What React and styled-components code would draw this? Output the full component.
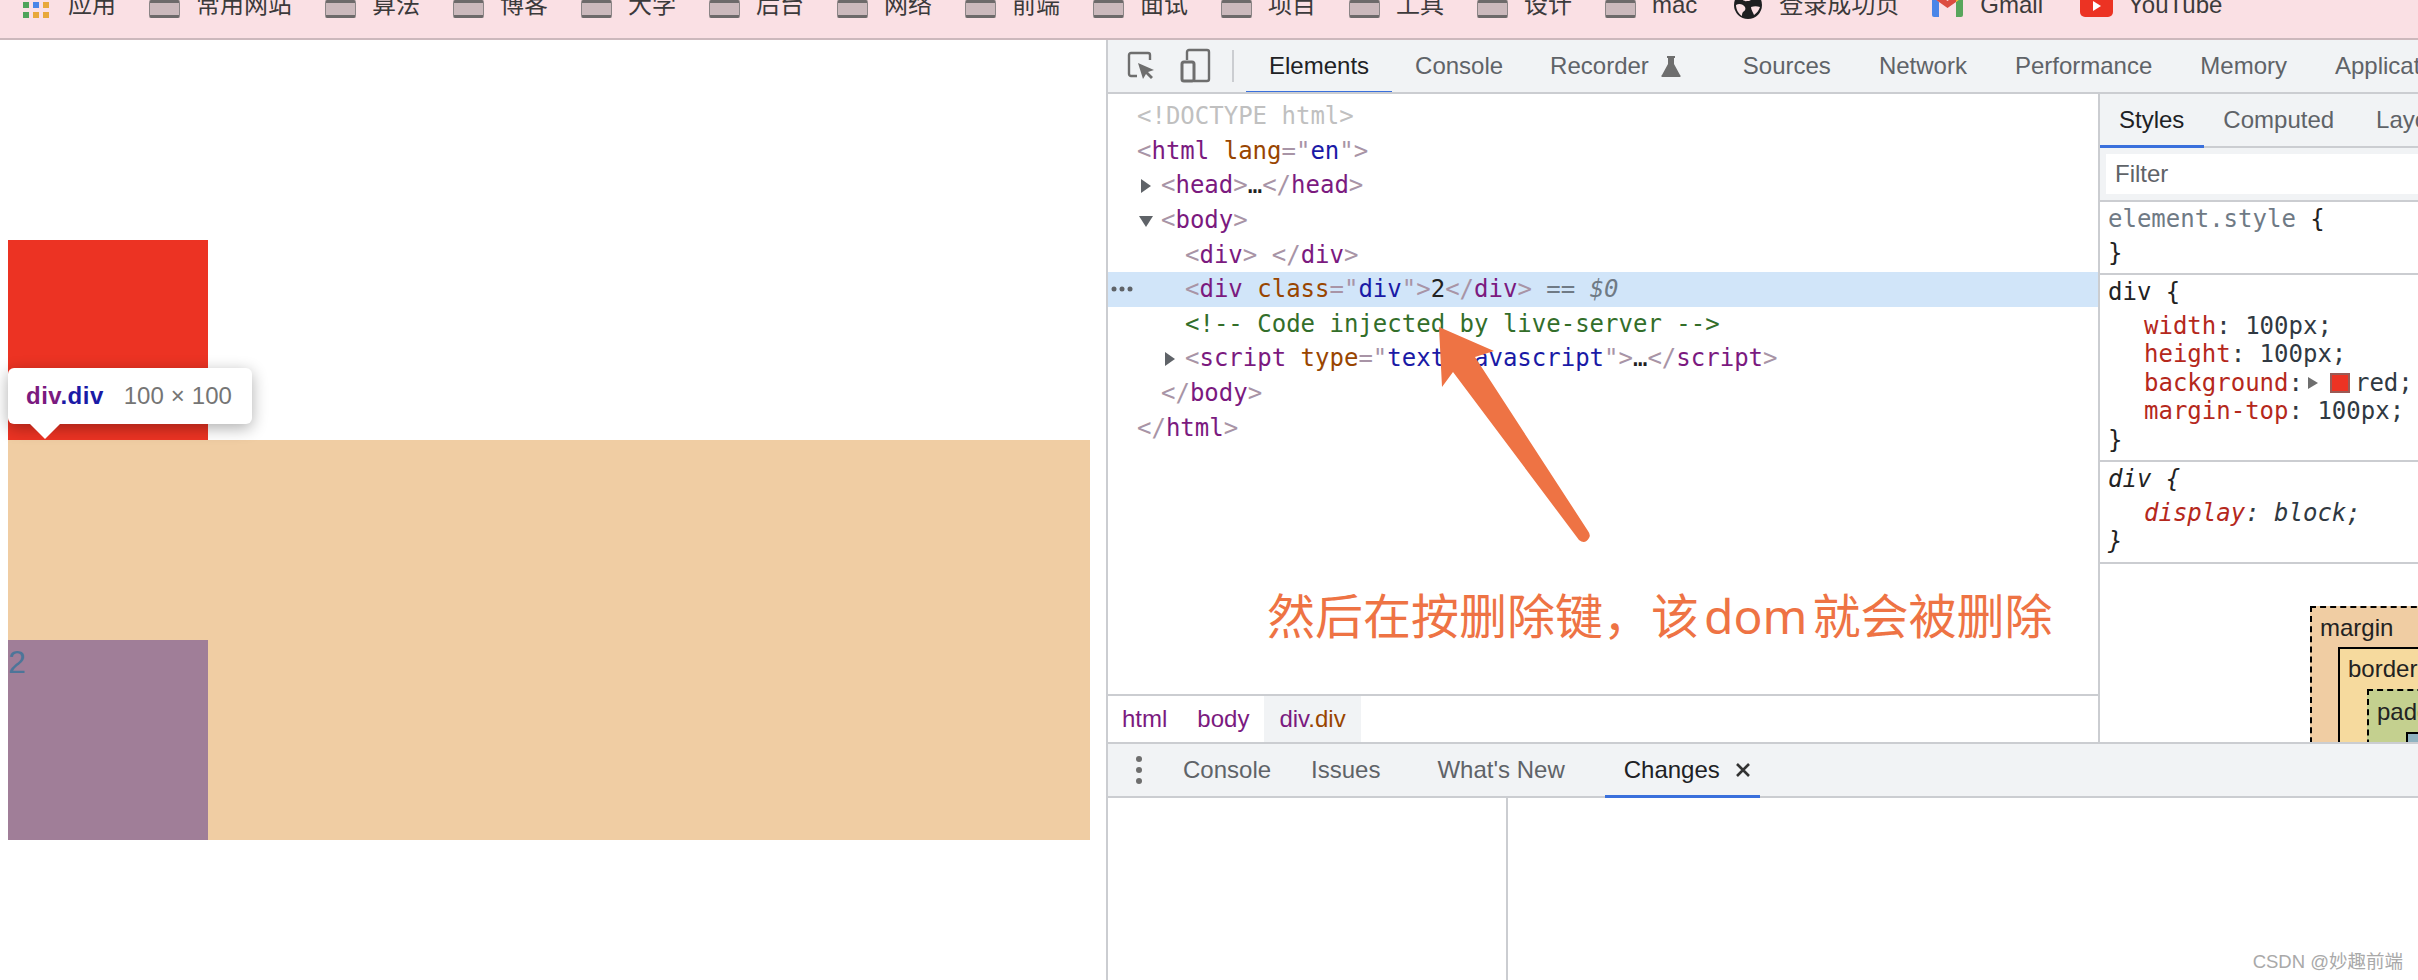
import React from "react";
import styled, { createGlobalStyle } from "styled-components";

const SANS = `"Liberation Sans", "Noto Sans CJK SC", Arial, sans-serif`;
const MONO = `"DejaVu Sans Mono", "Liberation Mono", monospace`;
const LINE = "#cbcdd1";
const PANEL = "#f1f3f5";
const BLUE = "#3a70dc";

const Global = createGlobalStyle`
  html, body { margin: 0; padding: 0; background: #fff; overflow: hidden; }
  * { box-sizing: border-box; }
`;

const Screen = styled.div`
  position: relative;
  width: 2418px;
  height: 980px;
  display: flex;
  flex-direction: column;
  overflow: hidden;
  font-family: ${SANS};
  font-size: 24px;
`;

/* bookmarks */
const BookmarkBar = styled.div`
  flex: none;
  height: 40px;
  display: flex;
  align-items: center;
  gap: 33px;
  padding: 0 0 28px 23px;
  background: #fae0e4;
  border-bottom: 2px solid #ccb8bc;
  overflow: visible;
  color: #3c3a3b;
  line-height: 30px;
  white-space: nowrap;
`;
const Bookmark = styled.div`
  display: flex;
  align-items: center;
  gap: ${(p) => p.$gap ?? 16}px;
  margin-right: ${(p) => p.$trail ?? 0}px;
`;
const Folder = styled.span`
  display: block;
  width: 31px;
  height: 18px;
  margin-top: 8px;
  background: #cbb9bc;
  border: 1px solid #8b8586;
  border-top: 3px solid #6d6a6a;
  border-bottom: 3px solid #6d6a6a;
  border-radius: 2px;
`;
const AppGrid = styled.span`
  display: grid;
  grid-template-columns: repeat(3, 6px);
  grid-auto-rows: 6px;
  gap: 4px;
`;
const AppDot = styled.span`
  background: ${(p) => p.$c};
`;

/* main split */
const Main = styled.div`
  flex: 1;
  min-height: 0;
  display: flex;
`;
const PagePane = styled.div`
  flex: none;
  width: 1106px;
  padding-left: 8px;
  background: #fff;
`;
const RedBox = styled.div`
  position: relative;
  width: 200px;
  height: 200px;
  margin-top: 200px;
  background: #ec3323;
`;
const MarginBox = styled.div`
  width: 1082px;
  height: 400px;
  padding-top: 200px;
  background: #f0cda3;
`;
const ContentBox = styled.div`
  width: 200px;
  height: 200px;
  background: #a07e98;
  color: #4d7599;
  font-size: 32px;
  line-height: 45px;
`;
const Tip = styled.div`
  position: absolute;
  left: 0;
  top: 128px;
  width: 244px;
  height: 56px;
  display: flex;
  align-items: center;
  gap: 20px;
  padding-left: 18px;
  background: #fff;
  border-radius: 6px;
  box-shadow: 0 4px 16px rgba(0, 0, 0, 0.32);
  white-space: nowrap;
  &::after {
    content: "";
    position: absolute;
    left: 22px;
    top: 56px;
    border-left: 15px solid transparent;
    border-right: 15px solid transparent;
    border-top: 15px solid #fff;
  }
`;
const TipName = styled.span`
  font-weight: 700;
  letter-spacing: 0.5px;
  color: #7b1a7f;
`;
const TipClass = styled.span`
  color: #1a1aa6;
`;
const TipSize = styled.span`
  color: #757575;
`;
const TipTimes = styled.span`
  margin: 0 7px;
`;

/* devtools */
const DevTools = styled.div`
  flex: 1;
  min-width: 0;
  display: flex;
  flex-direction: column;
  border-left: 2px solid ${LINE};
`;
const TopBar = styled.div`
  flex: none;
  height: 54px;
  display: flex;
  align-items: stretch;
  padding-left: 18px;
  background: ${PANEL};
  border-bottom: 2px solid ${LINE};
  overflow: hidden;
  white-space: nowrap;
`;
const ToolIcon = styled.svg`
  flex: none;
  align-self: center;
  display: block;
  margin-right: ${(p) => p.$mr}px;
`;
const Divider = styled.span`
  flex: none;
  align-self: center;
  width: 2px;
  height: 32px;
  margin-right: 12px;
  background: ${LINE};
`;
const Tab = styled.div`
  flex: none;
  display: flex;
  align-items: center;
  height: calc(100% + 2px);
  padding: 0 ${(p) => p.$pad ?? 24}px;
  margin-right: ${(p) => p.$mr ?? 0}px;
  color: ${(p) => (p.$active ? "#202124" : "#5f6368")};
  border-bottom: 3px solid ${(p) => (p.$active ? BLUE : "transparent")};
`;
const Flask = styled.svg`
  display: block;
  margin-left: 12px;
`;
const ElementsArea = styled.div`
  flex: none;
  height: 648px;
  display: flex;
`;
const DomColumn = styled.div`
  flex: none;
  width: 990px;
  display: flex;
  flex-direction: column;
`;
const DomTree = styled.div`
  flex: 1;
  padding-top: 5px;
  font-family: ${MONO};
  font-size: 24px;
  line-height: 34.65px;
  white-space: pre;
`;
const Row = styled.div`
  position: relative;
  height: 34.65px;
  padding-left: ${(p) => 29 + p.$depth * 24}px;
  background: ${(p) => (p.$selected ? "#d1e5f9" : "transparent")};
`;
const Caret = styled.span`
  display: inline-block;
  width: 24px;
  margin-left: -24px;
  vertical-align: middle;
  & > svg {
    display: block;
    margin-left: 2px;
  }
`;
const RowDots = styled.svg`
  position: absolute;
  left: 3px;
  top: 14px;
`;
const Br = styled.span`
  color: #a894a6;
`;
const TagName = styled.span`
  color: #7b1a7f;
`;
const AttrName = styled.span`
  color: #994500;
`;
const AttrValue = styled.span`
  color: #1a1aa6;
`;
const Plain = styled.span`
  color: #222;
`;
const Doctype = styled.span`
  color: #c0c0c0;
`;
const Comment = styled.span`
  color: #336e2a;
`;
const Muted = styled.span`
  color: #6f7a85;
  font-style: ${(p) => (p.$italic ? "italic" : "normal")};
`;
const Crumbs = styled.div`
  flex: none;
  height: 48px;
  display: flex;
  border-top: 2px solid ${LINE};
`;
const Crumb = styled.div`
  display: flex;
  align-items: center;
  padding: 0 15px 0 ${(p) => p.$l ?? 15}px;
  background: ${(p) => (p.$selected ? PANEL : "transparent")};
  color: #7b1a7f;
`;
const StylesPane = styled.div`
  flex: 1;
  min-width: 0;
  border-left: 2px solid ${LINE};
  display: flex;
  flex-direction: column;
  overflow: hidden;
`;
const StylesTabs = styled.div`
  flex: none;
  height: 54px;
  display: flex;
  background: ${PANEL};
  border-bottom: 2px solid ${LINE};
  white-space: nowrap;
`;
const StylesTab = styled.div`
  flex: none;
  display: flex;
  align-items: center;
  height: 54px;
  padding: 0 ${(p) => p.$pad}px 0 ${(p) => p.$padL ?? 19}px;
  color: ${(p) => (p.$active ? "#202124" : "#5f6368")};
  border-bottom: 3px solid ${(p) => (p.$active ? BLUE : "transparent")};
`;
const FilterBar = styled.div`
  flex: none;
  height: 54px;
  padding: 6px 0 6px 6px;
  background: ${PANEL};
  border-bottom: 2px solid ${LINE};
`;
const FilterInput = styled.div`
  height: 40px;
  display: flex;
  align-items: center;
  padding-left: 9px;
  background: #fff;
  color: #5f6368;
`;
const Rule = styled.div`
  flex: none;
  padding: 1px 0 6.5px 8px;
  font-family: ${MONO};
  font-size: 24px;
  line-height: 28.4px;
  white-space: pre;
  color: #222;
  font-style: ${(p) => (p.$italic ? "italic" : "normal")};
  border-bottom: 2px solid ${LINE};
`;
const Selector = styled.div`
  height: 35.5px;
  line-height: 32px;
`;
const Decl = styled.div`
  padding-left: 36px;
  display: flex;
  align-items: center;
`;
const PropName = styled.span`
  color: #b5281c;
`;
const PropValue = styled.span`
  color: #303942;
`;
const Swatch = styled.span`
  flex: none;
  width: 20px;
  height: 20px;
  margin: 0 5px 0 12px;
  background: #ec3323;
  border: 2px solid #9a5a55;
`;
const SmallTri = styled.svg`
  flex: none;
  margin-left: 5px;
  display: block;
`;
const BoxModel = styled.div`
  flex: 1;
  padding: 42px 0 0 210px;
`;
const ModelBox = styled.div`
  width: 500px;
  height: 400px;
  margin-left: ${(p) => p.$inset}px;
  background: ${(p) => p.$bg};
  border: 2px ${(p) => p.$line} #000;
`;
const ModelLabel = styled.div`
  height: ${(p) => p.$h}px;
  line-height: ${(p) => p.$h}px;
  padding-left: 8px;
  color: #222;
`;

/* drawer */
const Drawer = styled.div`
  flex: 1;
  min-height: 0;
  display: flex;
  flex-direction: column;
  border-top: 2px solid ${LINE};
`;
const DrawerBar = styled.div`
  flex: none;
  height: 54px;
  display: flex;
  align-items: stretch;
  padding-left: 21px;
  background: ${PANEL};
  border-bottom: 2px solid ${LINE};
  white-space: nowrap;
`;
const DrawerTab = styled.div`
  flex: none;
  display: flex;
  align-items: center;
  gap: 16px;
  height: 54px;
  padding: 0 ${(p) => p.$r ?? 0}px 0 ${(p) => p.$l ?? 0}px;
  margin-right: ${(p) => p.$mr ?? 0}px;
  color: ${(p) => (p.$active ? "#202124" : "#5f6368")};
  border-bottom: 3px solid ${(p) => (p.$active ? BLUE : "transparent")};
`;
const DrawerBody = styled.div`
  flex: 1;
  display: flex;
`;
const ChangesList = styled.div`
  flex: none;
  width: 400px;
  border-right: 2px solid ${LINE};
`;

/* overlays */
const ArrowMark = styled.svg`
  position: absolute;
  left: 1436px;
  top: 324px;
`;
const Note = styled.div`
  position: absolute;
  left: 1267px;
  top: 583px;
  font-family: "Noto Sans CJK SC", "Noto Sans", sans-serif;
  font-size: 48px;
  line-height: 60px;
  color: #ee7344;
  white-space: nowrap;
`;
const NoteLatin = styled.span`
  margin: 0 5px;
  font-family: "Noto Sans", sans-serif;
`;
const Watermark = styled.div`
  position: absolute;
  right: 15px;
  top: 950px;
  font-size: 18.5px;
  line-height: 24px;
  color: #a9a9a9;
  white-space: nowrap;
`;

const Apps = () => (
  <AppGrid>
    {["#df5b4d", "#df5b4d", "#df5b4d", "#4fa35a", "#4a86e8", "#e8a83a", "#4fa35a", "#e8a83a", "#e8a83a"].map((c, i) => (
      <AppDot key={i} $c={c} />
    ))}
  </AppGrid>
);

const Globe = () => (
  <svg width="28" height="28" viewBox="0 0 28 28" style={{ display: "block" }}>
    <circle cx="14" cy="14" r="14" fill="#1d1f21" />
    <path d="M9 3c3 2 6 2 9 1 2 2 0 5-3 6-3 0-6 1-6-2Z" fill="#fae0e4" />
    <path d="M2 14c3-2 7-1 9 2 1 2 0 4-2 5-1 1-1 3-1 4-3-2-6-6-6-11Z" fill="#fae0e4" />
    <path d="M17 16c3-1 6-1 9 0-1 3-3 6-6 8-1-3-3-5-3-8Z" fill="#fae0e4" />
  </svg>
);

const Gmail = () => (
  <svg width="31" height="24" viewBox="0 0 31 24" style={{ display: "block" }}>
    <path d="M0 3v19a2 2 0 0 0 2 2h5V9Z" fill="#4a86e8" />
    <path d="M31 3v19a2 2 0 0 1-2 2h-5V9Z" fill="#58a65c" />
    <path d="M0 3c0-3 4-4 6-2l9.500 7L25 1l-1 8-8.500 6L7 9 0 4Z" fill="#dc4d41" />
    <path d="M24 9V1c2-2 7-1 7 2v1Z" fill="#f0b92c" />
  </svg>
);

const YouTube = () => (
  <svg width="33" height="24" viewBox="0 0 33 24" style={{ display: "block" }}>
    <rect width="33" height="24" rx="5" fill="#ec3323" />
    <path d="M13 8l8 5-8 5Z" fill="#fff" />
  </svg>
);

const Tri = ({ down }) => (
  <svg width="14" height="14" viewBox="0 0 14 14">
    {down ? <path d="M0 2h14L7 13Z" fill="#5f6368" /> : <path d="M2 0l10 7-10 7Z" fill="#5f6368" />}
  </svg>
);

const Open = ({ name, children }) => (
  <>
    <Br>&lt;</Br>
    <TagName>{name}</TagName>
    {children}
    <Br>&gt;</Br>
  </>
);
const Close = ({ name }) => (
  <>
    <Br>&lt;/</Br>
    <TagName>{name}</TagName>
    <Br>&gt;</Br>
  </>
);
const Attr = ({ name, value }) => (
  <>
    {" "}
    <AttrName>{name}</AttrName>
    <Br>="</Br>
    <AttrValue>{value}</AttrValue>
    <Br>"</Br>
  </>
);

const FOLDERS_A = ["常用网站", "算法", "博客", "大学", "后台", "网络", "前端", "面试", "项目", "工具", "设计"];

export default function App() {
  return (
    <Screen>
      <Global />
      <BookmarkBar>
        <Bookmark $gap={19}>
          <Apps />
          <span>应用</span>
        </Bookmark>
        {FOLDERS_A.map((t) => (
          <Bookmark key={t}>
            <Folder />
            <span>{t}</span>
          </Bookmark>
        ))}
        <Bookmark $trail={4}>
          <Folder />
          <span>mac</span>
        </Bookmark>
        <Bookmark $gap={17}>
          <Globe />
          <span>登录成功页</span>
        </Bookmark>
        <Bookmark $gap={17} $trail={4}>
          <Gmail />
          <span>Gmail</span>
        </Bookmark>
        <Bookmark $gap={15}>
          <YouTube />
          <span>YouTube</span>
        </Bookmark>
      </BookmarkBar>

      <Main>
        <PagePane>
          <RedBox>
            <Tip>
              <TipName>
                div<TipClass>.div</TipClass>
              </TipName>
              <TipSize>
                100<TipTimes>×</TipTimes>100
              </TipSize>
            </Tip>
          </RedBox>
          <MarginBox>
            <ContentBox>2</ContentBox>
          </MarginBox>
        </PagePane>

        <DevTools>
          <TopBar>
            <ToolIcon $mr={22} width="30" height="30" viewBox="0 0 30 30" fill="none">
              <path d="M11 25H5a2 2 0 0 1-2-2V4a2 2 0 0 1 2-2h17a2 2 0 0 1 2 2v5" stroke="#6e6e6e" strokeWidth="2.4" />
              <path d="M12 12l16 7-6 2 5 5-2 2-5-5-3 5Z" fill="#6e6e6e" />
            </ToolIcon>
            <ToolIcon $mr={20} width="34" height="36" viewBox="0 0 34 36" fill="none">
              <path d="M9 12V4a2 2 0 0 1 2-2h18a2 2 0 0 1 2 2v27a2 2 0 0 1-2 2H16" stroke="#6e6e6e" strokeWidth="2.4" />
              <rect x="4" y="14" width="12" height="19" rx="2" stroke="#6e6e6e" strokeWidth="3" />
            </ToolIcon>
            <Divider />
            <Tab $active $pad={23}>Elements</Tab>
            <Tab $pad={23}>Console</Tab>
            <Tab $mr={14}>
              Recorder
              <Flask width="20" height="22" viewBox="0 0 20 22">
                <path d="M6 1h8v2h-1v6l6 11a1 1 0 0 1-1 2H2a1 1 0 0 1-1-2L7 9V3H6Z" fill="#6e6e6e" />
              </Flask>
            </Tab>
            <Tab>Sources</Tab>
            <Tab>Network</Tab>
            <Tab>Performance</Tab>
            <Tab>Memory</Tab>
            <Tab>Application</Tab>
          </TopBar>

          <ElementsArea>
            <DomColumn>
              <DomTree>
                <Row $depth={0}>
                  <Doctype>&lt;!DOCTYPE html&gt;</Doctype>
                </Row>
                <Row $depth={0}>
                  <Open name="html">
                    <Attr name="lang" value="en" />
                  </Open>
                </Row>
                <Row $depth={1}>
                  <Caret><Tri /></Caret>
                  <Open name="head" />
                  <Plain>…</Plain>
                  <Close name="head" />
                </Row>
                <Row $depth={1}>
                  <Caret><Tri down /></Caret>
                  <Open name="body" />
                </Row>
                <Row $depth={2}>
                  <Open name="div" /> <Close name="div" />
                </Row>
                <Row $depth={2} $selected>
                  <RowDots width="22" height="6" viewBox="0 0 22 6">
                    <circle cx="3" cy="3" r="2.500" fill="#5f6368" />
                    <circle cx="11" cy="3" r="2.500" fill="#5f6368" />
                    <circle cx="19" cy="3" r="2.500" fill="#5f6368" />
                  </RowDots>
                  <Open name="div">
                    <Attr name="class" value="div" />
                  </Open>
                  <Plain>2</Plain>
                  <Close name="div" />
                  <Muted> == </Muted>
                  <Muted $italic>$0</Muted>
                </Row>
                <Row $depth={2}>
                  <Comment>&lt;!-- Code injected by live-server --&gt;</Comment>
                </Row>
                <Row $depth={2}>
                  <Caret><Tri /></Caret>
                  <Open name="script">
                    <Attr name="type" value="text/javascript" />
                  </Open>
                  <Plain>…</Plain>
                  <Close name="script" />
                </Row>
                <Row $depth={1}>
                  <Close name="body" />
                </Row>
                <Row $depth={0}>
                  <Close name="html" />
                </Row>
              </DomTree>
              <Crumbs>
                <Crumb $l={14}>html</Crumb>
                <Crumb>body</Crumb>
                <Crumb $selected>
                  <span>div<AttrName>.div</AttrName></span>
                </Crumb>
              </Crumbs>
            </DomColumn>

            <StylesPane>
              <StylesTabs>
                <StylesTab $active $pad={20}>Styles</StylesTab>
                <StylesTab $pad={23}>Computed</StylesTab>
                <StylesTab $pad={0}>Layout</StylesTab>
              </StylesTabs>
              <FilterBar>
                <FilterInput>Filter</FilterInput>
              </FilterBar>
              <Rule>
                <Selector>
                  <Muted>element.style</Muted> {"{"}
                </Selector>
                <div>{"}"}</div>
              </Rule>
              <Rule>
                <Selector>div {"{"}</Selector>
                <Decl>
                  <PropName>width</PropName>
                  <PropValue>: 100px;</PropValue>
                </Decl>
                <Decl>
                  <PropName>height</PropName>
                  <PropValue>: 100px;</PropValue>
                </Decl>
                <Decl>
                  <PropName>background</PropName>
                  <PropValue>:</PropValue>
                  <SmallTri width="10" height="14" viewBox="0 0 10 14">
                    <path d="M0 1l10 6-10 6Z" fill="#6e6e6e" />
                  </SmallTri>
                  <Swatch />
                  <PropValue>red;</PropValue>
                </Decl>
                <Decl>
                  <PropName>margin-top</PropName>
                  <PropValue>: 100px;</PropValue>
                </Decl>
                <div>{"}"}</div>
              </Rule>
              <Rule $italic>
                <Selector>div {"{"}</Selector>
                <Decl>
                  <PropName>display</PropName>
                  <PropValue>: block;</PropValue>
                </Decl>
                <div>{"}"}</div>
              </Rule>
              <BoxModel>
                <ModelBox $inset={0} $bg="#f0cda3" $line="dashed">
                  <ModelLabel $h={39}>margin</ModelLabel>
                  <ModelBox $inset={26} $bg="#f6da9e" $line="solid">
                    <ModelLabel $h={40}>border</ModelLabel>
                    <ModelBox $inset={27} $bg="#c4d08f" $line="dashed">
                      <ModelLabel $h={41}>padding</ModelLabel>
                      <ModelBox $inset={37} $bg="#8fb2c0" $line="solid" />
                    </ModelBox>
                  </ModelBox>
                </ModelBox>
              </BoxModel>
            </StylesPane>
          </ElementsArea>

          <Drawer>
            <DrawerBar>
              <ToolIcon $mr={34} width="20" height="34" viewBox="0 0 20 34">
                <circle cx="10" cy="6" r="3" fill="#6e6e6e" />
                <circle cx="10" cy="17" r="3" fill="#6e6e6e" />
                <circle cx="10" cy="28" r="3" fill="#6e6e6e" />
              </ToolIcon>
              <DrawerTab $mr={40}>Console</DrawerTab>
              <DrawerTab $mr={57}>Issues</DrawerTab>
              <DrawerTab $mr={40}>What's New</DrawerTab>
              <DrawerTab $active $l={19} $r={10}>
                Changes
                <svg width="14" height="14" viewBox="0 0 14 14">
                  <path d="M1 1l12 12M13 1L1 13" stroke="#333" strokeWidth="2.600" />
                </svg>
              </DrawerTab>
            </DrawerBar>
            <DrawerBody>
              <ChangesList />
            </DrawerBody>
          </Drawer>
        </DevTools>
      </Main>

      <ArrowMark width="156" height="220" viewBox="0 0 156 220">
        <path d="M3 3L6 63L17 48L143 216Q149 221 153 214Q155 211 152 207L39 33L58 27Z" fill="#ee7344" />
      </ArrowMark>
      <Note>
        然后在按删除键，该<NoteLatin>dom</NoteLatin>就会被删除
      </Note>
      <Watermark>CSDN @妙趣前端</Watermark>
    </Screen>
  );
}
